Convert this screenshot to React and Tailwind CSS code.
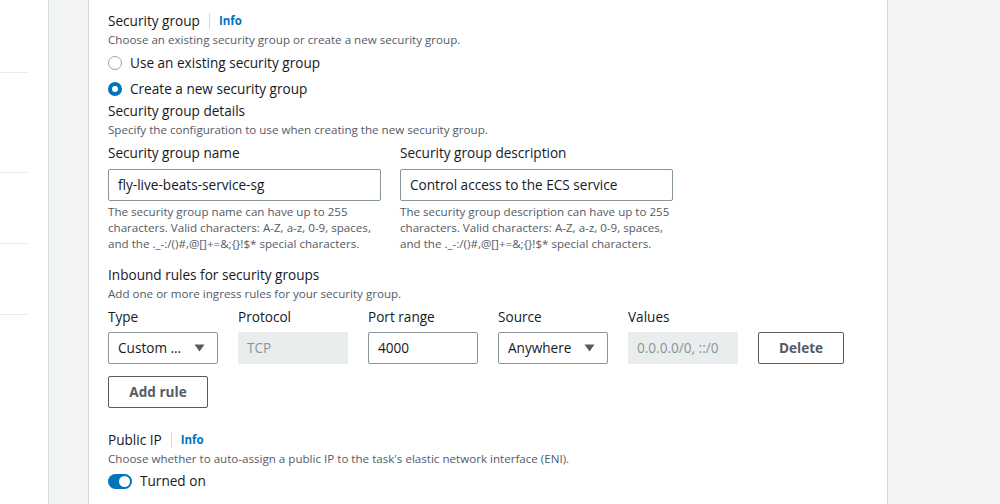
const font = { fontFamily: '"Open Sans", "Noto Sans", sans-serif' };

function Label({ children, className = '' }) {
  return <div className={`h-[20px] text-[13.6px] leading-[20px] text-[#16191f] ${className}`}>{children}</div>;
}

function Hint({ children, className = '' }) {
  return <div className={`h-[16px] text-[11.6px] leading-[16px] text-[#545b64] ${className}`}>{children}</div>;
}

function InfoLink() {
  return (
    <>
      <span className="mx-[9px] h-[16px] w-px bg-[#d5dbdb]" />
      <span className="text-[11.5px] font-bold text-[#0073bb]">Info</span>
    </>
  );
}

function Radio({ checked, label }) {
  return (
    <div className="flex h-[26px] items-center">
      {checked ? (
        <span className="h-[14px] w-[14px] rounded-full border-[4px] border-[#0073bb] bg-white" />
      ) : (
        <span className="h-[14px] w-[14px] rounded-full border-[1.5px] border-[#95a5a6] bg-white" />
      )}
      <span className="ml-[8px] text-[13.6px] text-[#16191f]">{label}</span>
    </div>
  );
}

function Caret() {
  return (
    <svg width="11" height="8" viewBox="0 0 11 8">
      <path d="M0.5 0.5 H10.5 L5.5 7.5 Z" fill="#545b64" />
    </svg>
  );
}

function Field({ label, children }) {
  return (
    <div className="w-[110px]">
      <Label>{label}</Label>
      <div className="mt-[5px]">{children}</div>
    </div>
  );
}

function Select({ value }) {
  return (
    <div className="flex h-[32px] items-center justify-between rounded-[2px] border border-[#879596] bg-white pl-[9px] pr-[12px] text-[13.6px] text-[#16191f]">
      <span>{value}</span>
      <Caret />
    </div>
  );
}

function Disabled({ value }) {
  return (
    <div className="flex h-[32px] items-center rounded-[2px] bg-[#eaeded] pl-[9px] text-[13.6px] text-[#879596]">{value}</div>
  );
}

function Button({ children, className = '' }) {
  return (
    <div className={`flex h-[32px] items-center justify-center rounded-[2px] border border-[#545b64] bg-white text-[13.6px] font-bold text-[#545b64] ${className}`}>
      {children}
    </div>
  );
}

function HelperText({ children }) {
  return <div className="mt-[3px] w-[276px] text-[11.6px] leading-[16px] text-[#545b64]">{children}</div>;
}

export default function App() {
  return (
    <div className="flex h-[504px] w-[1000px] overflow-hidden bg-[#f2f3f3]" style={font}>
      {/* Side navigation strip */}
      <div className="w-[49px] shrink-0 border-r border-[#d5dbdb] bg-white">
        <div className="mt-[72px] h-px w-[28px] bg-[#eaeded]" />
        <div className="mt-[99px] h-px w-[28px] bg-[#eaeded]" />
        <div className="mt-[70px] h-px w-[28px] bg-[#eaeded]" />
        <div className="mt-[70px] h-px w-[28px] bg-[#eaeded]" />
      </div>

      {/* Form panel */}
      <div className="ml-[39px] w-[800px] shrink-0 border-x border-[#d5dbdb] bg-white pl-[19px] pt-[11px]">
        <div className="flex h-[20px] items-center">
          <span className="text-[13.6px] text-[#16191f]">Security group</span>
          <InfoLink />
        </div>
        <Hint className="mt-[1px]">Choose an existing security group or create a new security group.</Hint>
        <div className="mt-[2px]">
          <Radio label="Use an existing security group" />
          <Radio checked label="Create a new security group" />
        </div>
        <Label className="-mt-[1px]">Security group details</Label>
        <Hint className="mt-[1px]">Specify the configuration to use when creating the new security group.</Hint>

        <div className="mt-[5px] flex gap-[19px]">
          <div className="w-[273px]">
            <Label>Security group name</Label>
            <div className="mt-[6px] flex h-[32px] items-center rounded-[2px] border border-[#879596] pl-[9px] text-[13.6px] text-[#16191f]">
              fly-live-beats-service-sg
            </div>
            <HelperText>
              The security group name can have up to 255 characters. Valid characters: A-Z, a-z, 0-9, spaces, and the ._-:/()#,@[]+=&;{'{}'}!$* special characters.
            </HelperText>
          </div>
          <div className="w-[273px]">
            <Label>Security group description</Label>
            <div className="mt-[6px] flex h-[32px] items-center rounded-[2px] border border-[#879596] pl-[9px] text-[13.6px] text-[#16191f]">
              Control access to the ECS service
            </div>
            <HelperText>
              The security group description can have up to 255 characters. Valid characters: A-Z, a-z, 0-9, spaces, and the ._-:/()#,@[]+=&;{'{}'}!$* special characters.
            </HelperText>
          </div>
        </div>

        <Label className="mt-[13px]">Inbound rules for security groups</Label>
        <Hint className="mt-[1px]">Add one or more ingress rules for your security group.</Hint>

        <div className="mt-[5px] flex items-end gap-[20px]">
          <Field label="Type">
            <Select value="Custom …" />
          </Field>
          <Field label="Protocol">
            <Disabled value="TCP" />
          </Field>
          <Field label="Port range">
            <div className="flex h-[32px] items-center rounded-[2px] border border-[#879596] pl-[9px] text-[13.6px] text-[#16191f]">4000</div>
          </Field>
          <Field label="Source">
            <Select value="Anywhere" />
          </Field>
          <Field label="Values">
            <Disabled value="0.0.0.0/0, ::/0" />
          </Field>
          <Button className="w-[86px]">Delete</Button>
        </div>

        <Button className="mt-[12px] w-[100px]">Add rule</Button>

        <div className="mt-[22px] flex h-[20px] items-center">
          <span className="text-[13.6px] text-[#16191f]">Public IP</span>
          <InfoLink />
        </div>
        <Hint className="mt-[1px]">Choose whether to auto-assign a public IP to the task's elastic network interface (ENI).</Hint>
        <div className="mt-[4px] flex h-[20px] items-center">
          <span className="flex h-[15px] w-[24px] items-center justify-end rounded-full bg-[#0073bb] pr-[2px]">
            <span className="h-[11px] w-[11px] rounded-full bg-white" />
          </span>
          <span className="ml-[8px] text-[13.6px] text-[#16191f]">Turned on</span>
        </div>
      </div>
    </div>
  );
}
